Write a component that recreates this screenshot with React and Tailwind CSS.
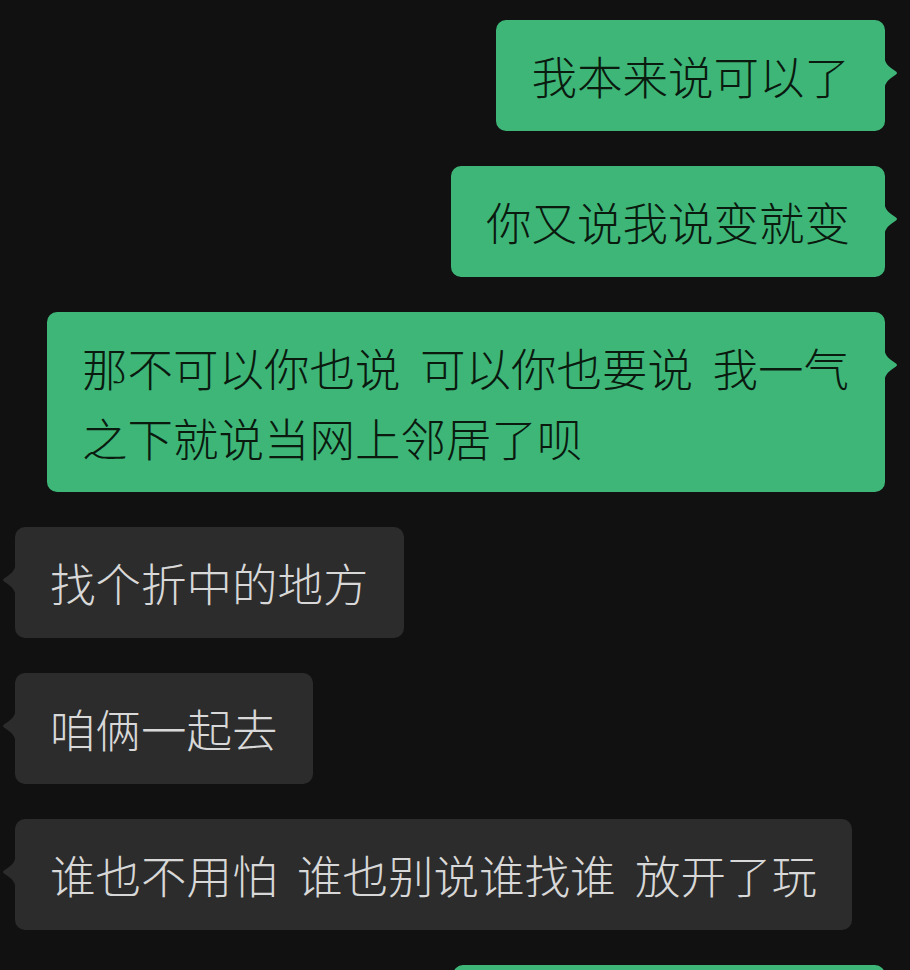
const MESSAGES = [
  { id: 1, mine: true, text: '我本来说可以了' },
  { id: 2, mine: true, text: '你又说我说变就变' },
  { id: 3, mine: true, text: '那不可以你也说 可以你也要说 我一气之下就说当网上邻居了呗', width: 'w-[838px]' },
  { id: 4, mine: false, text: '找个折中的地方' },
  { id: 5, mine: false, text: '咱俩一起去' },
  { id: 6, mine: false, text: '谁也不用怕 谁也别说谁找谁 放开了玩' },
  { id: 7, mine: true, text: '', width: 'w-[432px]' },
]

function Tail({ mine }) {
  return (
    <svg
      width="14"
      height="34"
      viewBox="0 0 14 34"
      className={`absolute top-[36px] ${mine ? '-right-[13px]' : '-left-[13px] -scale-x-100'}`}
    >
      <path
        d="M0 0 C1 6 3 9 7 12 L12 15.5 C13.3 16.5 13.3 17.5 12 18.5 L7 22 C3 25 1 28 0 34 Z"
        fill={mine ? '#3eb678' : '#2c2c2c'}
      />
    </svg>
  )
}

function Bubble({ msg }) {
  const { mine, text, width } = msg
  return (
    <div className={`flex ${mine ? 'justify-end' : 'justify-start'}`}>
      <div
        className={`relative rounded-[10px] px-[35px] py-[20px] text-[45.5px] leading-[70px] font-light [word-spacing:9.5px] min-h-[111px] ${width || ''} ${
          mine ? 'bg-[#3eb678] text-[#0a1a0f]' : 'bg-[#2c2c2c] text-[#d8d8d8]'
        }`}
      >
        {text}
        <Tail mine={mine} />
      </div>
    </div>
  )
}

export default function App() {
  return (
    <div
      className="w-[910px] h-[970px] overflow-hidden bg-[#111111] pt-[20px] pl-[15px] pr-[25px] flex flex-col gap-[35px]"
      style={{ fontFamily: '"Noto Sans CJK SC", "Noto Sans", sans-serif' }}
    >
      {MESSAGES.map(msg => (
        <Bubble key={msg.id} msg={msg} />
      ))}
    </div>
  )
}
